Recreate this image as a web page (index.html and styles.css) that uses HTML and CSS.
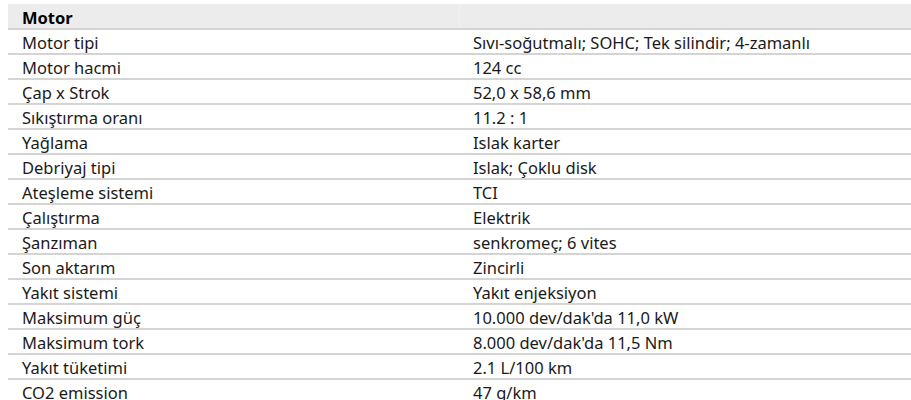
FILE: index.html
```html
<!DOCTYPE html>
<html lang="tr">
<head>
<meta charset="utf-8">
<link rel="stylesheet" href="styles.css">
</head>
<body>
<div class="wrap">
<table class="specs">
<thead>
<tr class="head"><th>Motor</th><th></th></tr>
</thead>
<tbody>
<tr><td>Motor tipi</td><td>Sıvı-soğutmalı; SOHC; Tek silindir; 4-zamanlı</td></tr>
<tr><td>Motor hacmi</td><td>124 cc</td></tr>
<tr><td>Çap x Strok</td><td>52,0 x 58,6 mm</td></tr>
<tr><td>Sıkıştırma oranı</td><td>11.2 : 1</td></tr>
<tr><td>Yağlama</td><td>Islak karter</td></tr>
<tr><td>Debriyaj tipi</td><td>Islak; Çoklu disk</td></tr>
<tr><td>Ateşleme sistemi</td><td>TCI</td></tr>
<tr><td>Çalıştırma</td><td>Elektrik</td></tr>
<tr><td>Şanzıman</td><td>senkromeç; 6 vites</td></tr>
<tr><td>Son aktarım</td><td>Zincirli</td></tr>
<tr><td>Yakıt sistemi</td><td>Yakıt enjeksiyon</td></tr>
<tr><td>Maksimum güç</td><td>10.000 dev/dak'da 11,0 kW</td></tr>
<tr><td>Maksimum tork</td><td>8.000 dev/dak'da 11,5 Nm</td></tr>
<tr><td>Yakıt tüketimi</td><td>2.1 L/100 km</td></tr>
<tr><td>CO2 emission</td><td>47 g/km</td></tr>
</tbody>
</table>
</div>
</body>
</html>
```
FILE: styles.css
```css
html, body {
  margin: 0;
  padding: 0;
  background: #fff;
  overflow: hidden;
}
.wrap {
  padding: 4px 0 0 8px;
}
.specs {
  width: 903px;
  border-collapse: collapse;
  table-layout: fixed;
  font-family: "Noto Sans", sans-serif;
  font-size: 16.5px;
  color: #1a1a1a;
}
.specs th, .specs td {
  width: 50%;
  height: 20px;
  padding: 3px 0 0 14px;
  text-align: left;
  vertical-align: middle;
  border-bottom: 2px solid #d4d4d4;
  line-height: 20px;
  white-space: nowrap;
}
.specs td + td, .specs th + th {
  padding-left: 13px;
}
.head th {
  background: #ececec;
  font-weight: 700;
  color: #000;
  height: 21px;
}
.head th + th {
  border-left: 1px solid #f1f1f1;
}
```
